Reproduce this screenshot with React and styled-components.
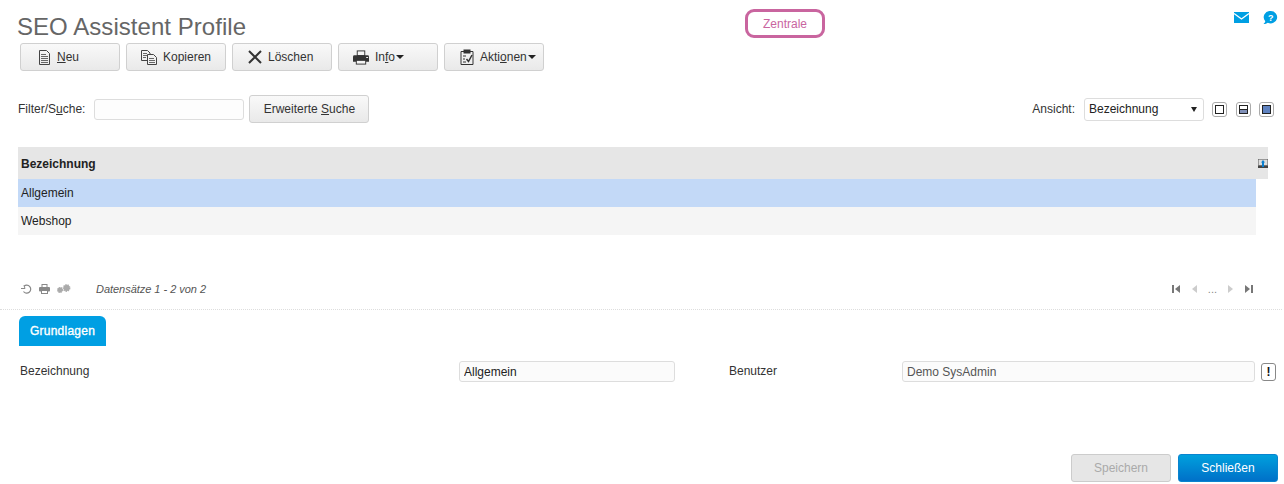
import React from 'react';
import styled, { createGlobalStyle } from 'styled-components';

const Global = createGlobalStyle`
  html, body { margin: 0; padding: 0; background: #fff; }
  body { font-family: "Liberation Sans", Arial, sans-serif; font-size: 12px; color: #222; }
`;
const Page = styled.div`
  width: 1284px; height: 484px; overflow: hidden; display: flex; flex-direction: column; position: relative;
`;
const Header = styled.header`
  height: 43px; display: grid; grid-template-columns: 745px 80px 1fr; box-sizing: border-box; padding-top: 9px;
`;
const Title = styled.h1`
  margin: 4px 0 0 17px; font-size: 24px; line-height: 27px; font-weight: 400; color: #666; letter-spacing: .05px;
`;
const Badge = styled.div`
  height: 29px; box-sizing: border-box; border: 3px solid #c9659f; border-radius: 9px; color: #c9659f;
  display: flex; align-items: center; justify-content: center; font-size: 12px;
`;
const TopIcons = styled.div`
  display: flex; justify-content: flex-end; gap: 14px; padding: 2px 6px 0 0; align-items: flex-start;
  > svg:first-child { margin-top: 1px; }
`;
const Toolbar = styled.div`
  display: flex; gap: 6px; padding-left: 20px; height: 28px;
`;
const Btn = styled.button`
  width: 100px; height: 28px; box-sizing: border-box; border: 1px solid #d0d0d0; border-radius: 3px;
  background: linear-gradient(#f9f9f9, #e9e9e9); color: #333; font: 12px "Liberation Sans", Arial, sans-serif;
  display: flex; align-items: center; gap: ${p => p.$gap ?? 6}px; padding: 0 0 0 ${p => p.$pad}px; white-space: nowrap;
`;
const Caret = styled.span`
  display: inline-block; width: 0; height: 0; border: 4px solid transparent; border-top: 4px solid #222; border-bottom: 0; margin-left: ${p => 1 - (p.$gap ?? 6)}px;
`;
const FilterRow = styled.div`
  margin-top: 24px; height: 28px; display: flex; align-items: center; padding: 0 10px 0 18px;
`;
const Label = styled.span`
  color: #333;
`;
const FilterInput = styled.input`
  width: 150px; height: 21px; box-sizing: border-box; margin: 0 5px 0 9px; border: 1px solid #ddd; border-radius: 3px; background: #fdfdfd;
`;
const SearchBtn = styled(Btn)`
  width: 120px; justify-content: center; padding: 0;
`;
const Spacer = styled.div`
  flex: 1;
`;
const Select = styled.div`
  width: 120px; height: 23px; box-sizing: border-box; margin: 0 8px 0 9px; border: 1px solid #ddd; border-radius: 3px;
  display: flex; align-items: center; justify-content: space-between; padding: 0 6px 0 4px; color: #222;
`;
const SelectArrow = styled.span`
  width: 0; height: 0; border-left: 3px solid transparent; border-right: 3px solid transparent; border-top: 5px solid #222;
`;
const ViewBtn = styled.div`
  width: 15px; height: 15px; box-sizing: border-box; border: 1px solid #aaa; border-radius: 3px; margin-left: ${p => p.$first ? 0 : 8.5}px;
  display: flex; align-items: center; justify-content: center;
`;
const ViewInner = styled.div`
  width: 9px; height: 9px; box-sizing: border-box; border: 1px solid #222;
  background: ${p => p.$mode === 'full' ? '#5f82c0' : p.$mode === 'half' ? 'linear-gradient(#fff 0 40%, #222 40% 55%, #8090b8 55%)' : '#fff'};
`;
const Table = styled.div`
  margin: 24px 16px 0 18px;
`;
const HeadRow = styled.div`
  height: 32px; box-sizing: border-box; padding: 1px 0 0 3px; background: #e6e6e6; display: flex; align-items: center; justify-content: space-between;
  font-weight: 700; color: #222;
`;
const Row = styled.div`
  height: 28px; margin-right: 12px; padding-left: 3px; display: flex; align-items: center; color: #222;
  background: ${p => p.$selected ? '#c3d9f7' : '#f5f5f5'};
`;
const Pager = styled.div`
  margin-top: 47px; height: 14px; display: flex; align-items: center; padding: 0 31px 0 21px; color: #777;
`;
const PagerIcons = styled.div`
  display: flex; align-items: center; gap: 7px; width: 75px;
`;
const Records = styled.em`
  font-size: 11px; color: #555; letter-spacing: -.03px;
`;
const Nav = styled.div`
  display: flex; align-items: center; gap: 11px; color: #888; font-size: 11px;
`;
const Divider = styled.div`
  margin: 13px 2px 0 0; border-top: 1px dotted #ddd;
`;
const Tabs = styled.div`
  margin: 6px 0 0 19px;
`;
const Tab = styled.div`
  width: 87px; height: 30px; background: #009fe3; border-radius: 6px 6px 0 0; color: #fff; letter-spacing: .25px; -webkit-text-stroke: .35px #fff;
  display: flex; align-items: center; justify-content: center;
`;
const Form = styled.div`
  margin-top: 15px; height: 21px; display: grid; grid-template-columns: 439px 216px 227px 353px 24px; padding-left: 20px; align-items: center; color: #333;
`;
const FormLabel = styled.span`
  padding-bottom: 2px; padding-left: ${p => p.$indent ?? 0}px;
`;
const Field = styled.input`
  width: 100%; height: 21px; box-sizing: border-box; border: 1px solid #ddd; border-radius: 3px; background: #fbfbfb; padding: 0 4px;
  font: 12px "Liberation Sans", Arial, sans-serif; color: ${p => p.$muted ? '#555' : '#222'};
`;
const Bang = styled.div`
  width: 15px; height: 18px; box-sizing: border-box; border: 1px solid #888; border-radius: 3px; margin-left: 6px;
  display: flex; align-items: center; justify-content: center; font-weight: 700; color: #111;
`;
const Actions = styled.div`
  margin-top: auto; margin-bottom: 2px; display: flex; justify-content: flex-end; gap: 7px; padding-right: 6px;
`;
const Save = styled(Btn)`
  justify-content: center; padding: 0; color: #aaa; background: #e6e6e6; border-color: #ccc;
`;
const Close = styled(Btn)`
  justify-content: center; padding: 0; color: #fff; background: linear-gradient(#00a0dd, #0070c8); border-color: #0a84cf;
`;

const DocIcon = () => (
  <svg width="13" height="15" viewBox="0 0 13 15" fill="none" stroke="#444"><path d="M1.500.5H8.500L11.500 3.500V14.500H1.500Z"/><path d="M3 4.500H8M3 6.500H10M3 8.500H10M3 10.500H10M3 12.500H10" strokeWidth=".8"/></svg>
);
const CopyIcon = () => (
  <svg width="16" height="15" viewBox="0 0 16 15" fill="none" stroke="#444"><path d="M.5.500H6.500L9 3V10.500H.5Z"/><path d="M2 3.500H6M2 5.500H6M2 7.500H5" strokeWidth=".8"/><path d="M6.500 4.500H12.500L15.500 7.500V14.500H6.500Z" fill="#f1f1f1"/><path d="M8 8.500H13M8 10.500H14M8 12.500H14" strokeWidth=".8"/></svg>
);
const CrossIcon = () => (
  <svg width="14" height="14" viewBox="0 0 14 14" fill="none" stroke="#333" strokeWidth="2"><path d="M1 1L13 13M13 1L1 13"/></svg>
);
const PrinterIcon = () => (
  <svg width="16" height="15" viewBox="0 0 17 15" style={{overflow:'visible'}}><rect x="4.500" y=".5" width="8" height="5" fill="#f4f4f4" stroke="#333"/><path d="M0 6.500Q0 5 1.500 5H15.500Q17 5 17 6.500V12H0Z" fill="#333"/><rect x="3.500" y="10.500" width="10" height="4" fill="#f4f4f4" stroke="#333"/><rect x="14" y="7" width="2" height="1" fill="#fff"/></svg>
);
const ClipboardIcon = () => (
  <svg width="14" height="16" viewBox="0 0 14 16" fill="none" stroke="#333"><path d="M4 2.500H1V15.500H13V2.500H10"/><rect x="4" y="1" width="6" height="3" fill="#333"/><path d="M3 7H6M3 10H5M3 13H6"/><path d="M6.500 10L8.500 12.500L12 6" strokeWidth="1.500"/></svg>
);
const MailIcon = () => (
  <svg width="15" height="11" viewBox="0 0 15 11"><rect width="15" height="11" fill="#009fe3"/><path d="M0 1.500L7.500 7L15 1.500" fill="none" stroke="#fff" strokeWidth="1.400"/></svg>
);
const HelpIcon = () => (
  <svg width="15" height="14" viewBox="0 0 15 14"><path d="M7.800 0a6.400 6.200 0 1 1-3 11.700c-1.300.9-2.800 1.400-4.300 1.300 1-.7 1.600-1.600 1.800-2.800A6.400 6.200 0 0 1 7.800 0z" fill="#009fe3"/><text x="7.800" y="10" fontSize="9" fontWeight="700" fill="#fff" textAnchor="middle" fontFamily="Liberation Sans">?</text></svg>
);
const RefreshIcon = () => (
  <svg width="11" height="10" viewBox="0 0 11 10" fill="none" stroke="#888" strokeWidth="1.200"><path d="M3 2.200A4 4 0 1 1 2.500 7.500"/><path d="M0 4.500H4L3 1.500" strokeWidth="1"/></svg>
);
const MiniPrinter = () => (
  <svg width="11" height="10" viewBox="0 0 11 10"><rect x="3" y=".5" width="5" height="3" fill="#fff" stroke="#888"/><rect y="3" width="11" height="4.500" rx="1" fill="#888"/><rect x="2.500" y="6.500" width="6" height="3" fill="#fff" stroke="#888"/></svg>
);
const Gears = () => (
  <svg width="14" height="10" viewBox="0 0 14 10" fill="#aaa" stroke="#aaa"><circle cx="3" cy="6" r="2.400" strokeWidth="1.200" strokeDasharray="1.200 .6"/><circle cx="9.500" cy="4" r="3" strokeWidth="1.800" strokeDasharray="1.300 .8"/></svg>
);
const SortIcon = () => (
  <svg width="10" height="9" viewBox="0 0 10 9"><rect x=".25" y=".25" width="9.500" height="6" fill="#ddd" stroke="#555" strokeWidth=".5"/><rect x="0" y="6.500" width="10" height="2.500" fill="#444"/><path d="M5 1L7 3.500H6V8H4V3.500H3z" fill="#0a7fd0"/></svg>
);
const First = () => (<svg width="9" height="8" viewBox="0 0 9 8" fill="#777"><rect width="2" height="8"/><path d="M8 0v8L3 4z"/></svg>);
const Prev = () => (<svg width="5" height="8" viewBox="0 0 5 8" fill="#ccc"><path d="M5 0v8L0 4z"/></svg>);
const Next = () => (<svg width="5" height="8" viewBox="0 0 5 8" fill="#ccc"><path d="M0 0v8l5-4z"/></svg>);
const Last = () => (<svg width="9" height="8" viewBox="0 0 9 8" fill="#777"><rect x="7" width="2" height="8"/><path d="M1 0v8l5-4z"/></svg>);

export default function App() {
  return (
    <Page>
      <Global />
      <Header>
        <Title>SEO Assistent Profile</Title>
        <Badge>Zentrale</Badge>
        <TopIcons>
          <MailIcon />
          <HelpIcon />
        </TopIcons>
      </Header>
      <Toolbar>
        <Btn $pad={17}><DocIcon /><span><u>N</u>eu</span></Btn>
        <Btn $pad={14}><CopyIcon /><span>Kopieren</span></Btn>
        <Btn $pad={15}><CrossIcon /><span>Löschen</span></Btn>
        <Btn $pad={14}><PrinterIcon /><span>In<u>f</u>o</span><Caret /></Btn>
        <Btn $pad={15}><ClipboardIcon /><span>Akti<u>o</u>nen</span><Caret /></Btn>
      </Toolbar>
      <FilterRow>
        <Label>Filter/S<u>u</u>che:</Label>
        <FilterInput />
        <SearchBtn><span>Erweiterte <u>S</u>uche</span></SearchBtn>
        <Spacer />
        <Label>Ansicht:</Label>
        <Select>Bezeichnung<SelectArrow /></Select>
        <ViewBtn $first><ViewInner /></ViewBtn>
        <ViewBtn><ViewInner $mode="half" /></ViewBtn>
        <ViewBtn><ViewInner $mode="full" /></ViewBtn>
      </FilterRow>
      <Table>
        <HeadRow>Bezeichnung<SortIcon /></HeadRow>
        <Row $selected>Allgemein</Row>
        <Row>Webshop</Row>
      </Table>
      <Pager>
        <PagerIcons>
          <RefreshIcon />
          <MiniPrinter />
          <Gears />
        </PagerIcons>
        <Records>Datensätze 1 - 2 von 2</Records>
        <Spacer />
        <Nav><First /><Prev /><span>...</span><Next /><Last /></Nav>
      </Pager>
      <Divider />
      <Tabs><Tab>Grundlagen</Tab></Tabs>
      <Form>
        <FormLabel>Bezeichnung</FormLabel>
        <Field defaultValue="Allgemein" />
        <FormLabel $indent={54}>Benutzer</FormLabel>
        <Field $muted defaultValue="Demo SysAdmin" />
        <Bang>!</Bang>
      </Form>
      <Actions>
        <Save>Speichern</Save>
        <Close>Schließen</Close>
      </Actions>
    </Page>
  );
}
